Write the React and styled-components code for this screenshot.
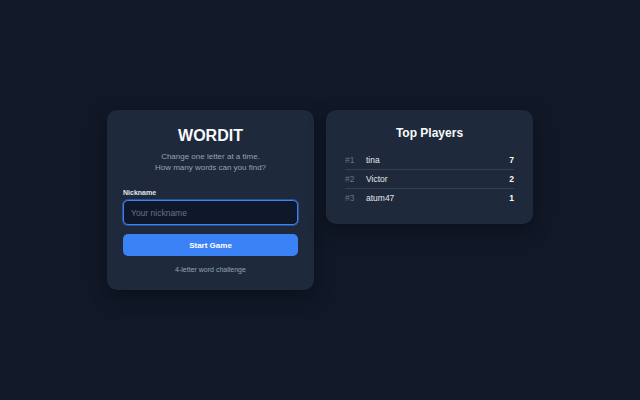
import React from "react";
import styled, { createGlobalStyle } from "styled-components";

const Global = createGlobalStyle`
  html, body { margin: 0; padding: 0; background: #111827; }
  body { font-family: "Liberation Sans", Arial, sans-serif; }
  * { box-sizing: border-box; }
`;

const Page = styled.div`
  width: 640px;
  height: 400px;
  display: flex;
  justify-content: center;
  align-items: flex-start;
  gap: 12px;
  padding-top: 110px;
  background: #111827;
`;

const Card = styled.div`
  width: 207px;
  background: #1e293b;
  border-radius: 10px;
  box-shadow: 0 6px 18px rgba(0, 0, 0, 0.35);
  padding: ${(p) => p.$pad};
  display: flex;
  flex-direction: column;
`;

const Title = styled.h1`
  margin: 0;
  color: #f8fafc;
  font-size: ${(p) => p.$size};
  font-weight: 700;
  text-align: center;
  line-height: 1.2;
`;

const Subtitle = styled.p`
  margin: 6px 0 0;
  color: #94a3b8;
  font-size: 8px;
  line-height: 11px;
  text-align: center;
`;

const Label = styled.label`
  margin-top: 16px;
  color: #e2e8f0;
  font-size: 7px;
  font-weight: 600;
`;

const Input = styled.input`
  margin-top: 4px;
  height: 25px;
  width: 100%;
  border: 1px solid #3b82f6;
  box-shadow: 0 0 0 1px rgba(59, 130, 246, 0.45);
  border-radius: 5px;
  background: #0f172a;
  color: #e2e8f0;
  padding: 0 7px;
  font-family: inherit;
  font-size: 8.5px;
  outline: none;
  &::placeholder { color: #64748b; }
`;

const Button = styled.button`
  margin-top: 9px;
  height: 22px;
  width: 100%;
  border: none;
  border-radius: 5px;
  background: #3b82f6;
  color: #ffffff;
  font-family: inherit;
  font-size: 8px;
  font-weight: 700;
`;

const Footer = styled.div`
  margin-top: 10px;
  color: #94a3b8;
  font-size: 7px;
  text-align: center;
`;

const List = styled.ul`
  list-style: none;
  margin: 10px 0 0;
  padding: 0;
`;

const Row = styled.li`
  display: flex;
  align-items: center;
  height: 19px;
  font-size: 8.5px;
  border-top: ${(p) => (p.$first ? "none" : "1px solid #334155")};
`;

const Rank = styled.span`
  width: 21px;
  color: #64748b;
`;

const Name = styled.span`
  flex: 1;
  color: #e2e8f0;
`;

const Score = styled.span`
  color: #f8fafc;
  font-weight: 700;
`;

const players = [
  { name: "tina", score: 7 },
  { name: "Victor", score: 2 },
  { name: "atum47", score: 1 },
];

export default function App() {
  return (
    <>
      <Global />
      <Page>
        <Card $pad="16px 16px 17px">
          <Title $size="16px">WORDIT</Title>
          <Subtitle>
            Change one letter at a time.
            <br />
            How many words can you find?
          </Subtitle>
          <Label htmlFor="nick">Nickname</Label>
          <Input id="nick" placeholder="Your nickname" />
          <Button>Start Game</Button>
          <Footer>4-letter word challenge</Footer>
        </Card>
        <Card $pad="16px 19px 17px">
          <Title $size="12px">Top Players</Title>
          <List>
            {players.map((p, i) => (
              <Row key={p.name} $first={i === 0}>
                <Rank>#{i + 1}</Rank>
                <Name>{p.name}</Name>
                <Score>{p.score}</Score>
              </Row>
            ))}
          </List>
        </Card>
      </Page>
    </>
  );
}
